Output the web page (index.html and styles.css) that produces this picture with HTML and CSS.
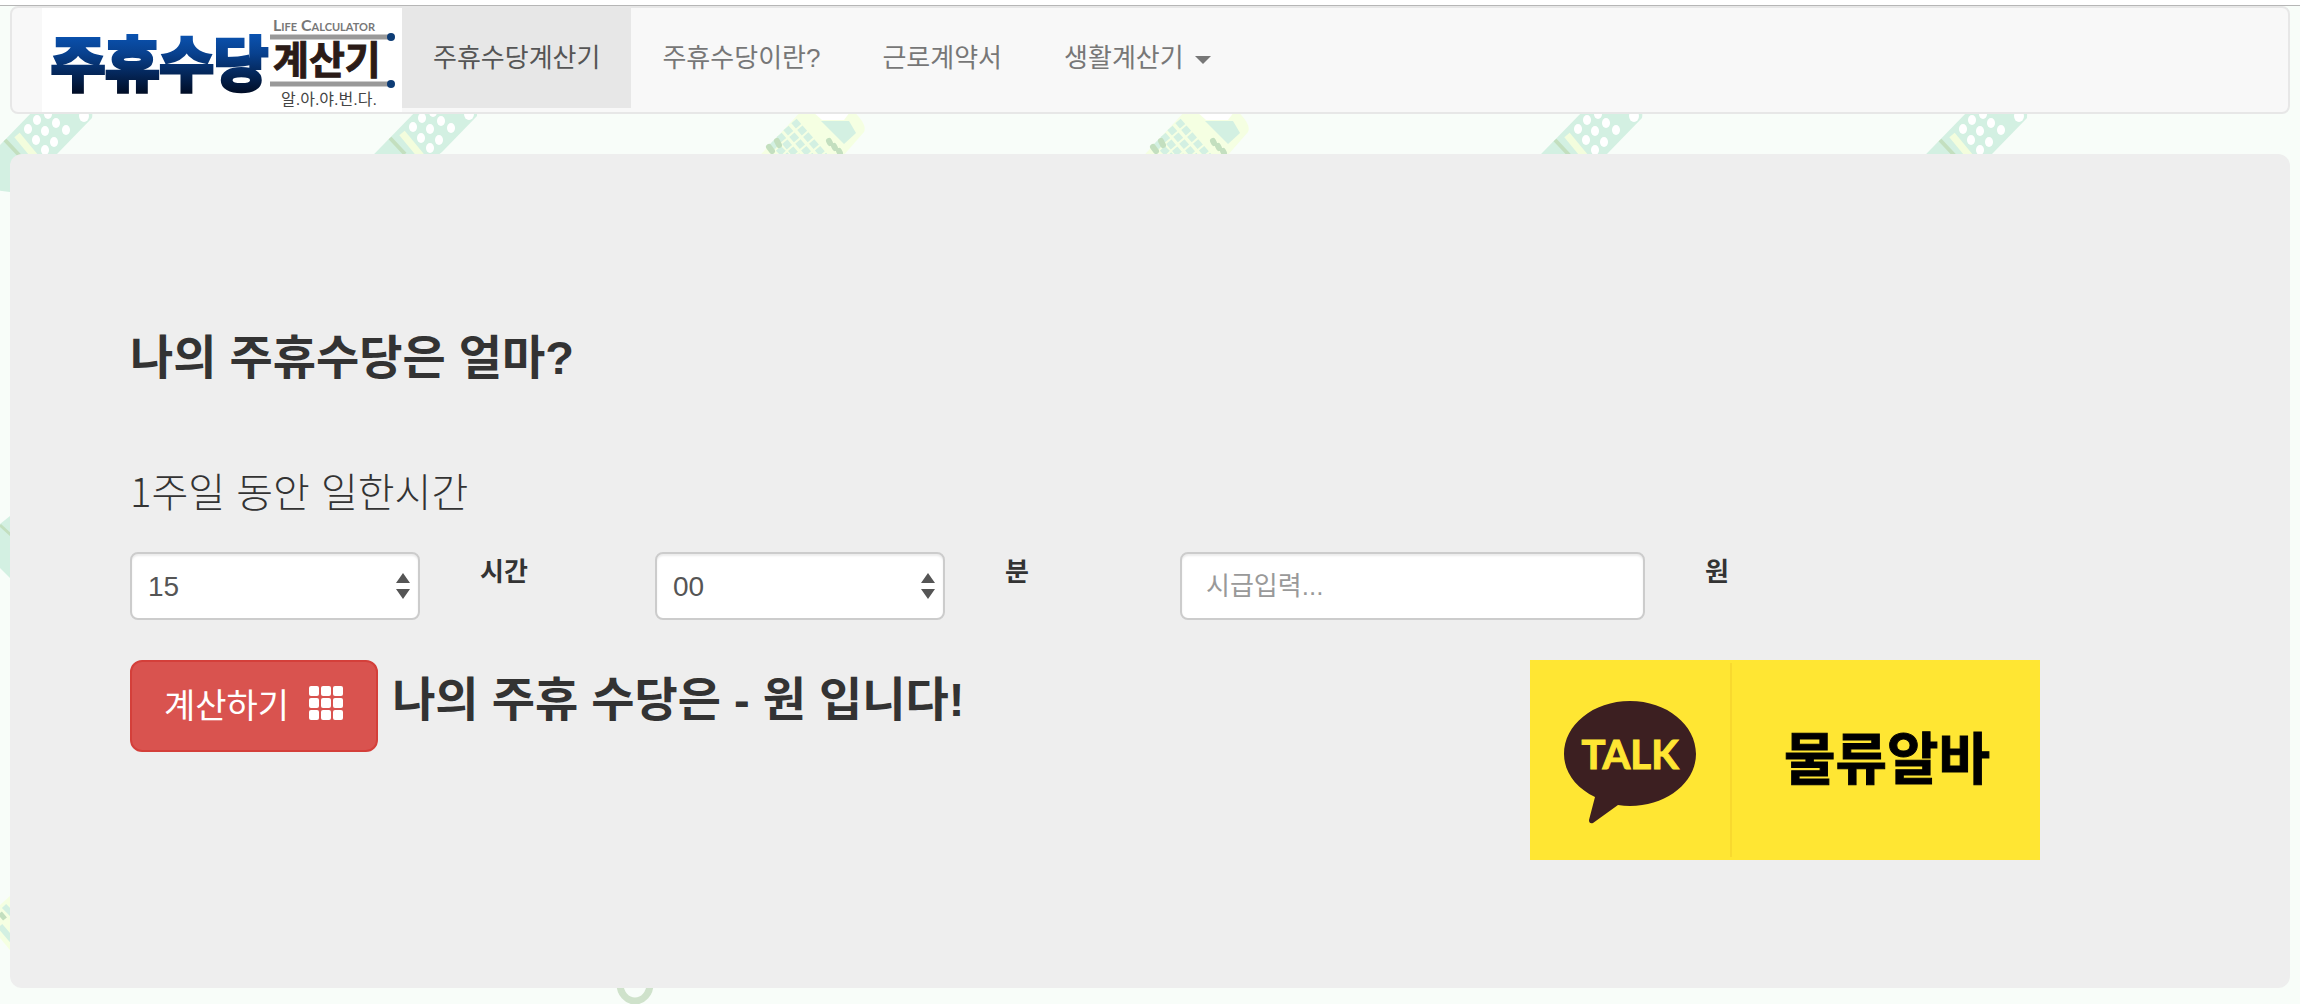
FILE: index.html
```html
<!DOCTYPE html>
<html lang="ko">
  <head>
    <meta charset="UTF-8" />
    <meta name="viewport" content="width=device-width, initial-scale=1.0" />
    <title>주휴수당계산기</title>
    <link rel="stylesheet" href="styles.css">
  </head>
  <body>
    <!-- background pattern -->
    <svg class="pattern" aria-hidden="true">
      <defs>
        <g id="remote">
          <path fill="#d3f0e2" d="M-40 186 L34 110 Q44 100 58 100 L84 104 Q94 108 92 118 L57 154 L10 192 Z" />
          <path stroke="#c3dfbf" stroke-width="4" d="M5 140 L20 156" />
          <path stroke="#f3fddd" stroke-width="7" d="M17 135 L36 158" />
          <g fill="#fff">
            <ellipse cx="28" cy="129" rx="4" ry="5" /><ellipse cx="36" cy="140" rx="4" ry="5" />
            <ellipse cx="45" cy="150" rx="4" ry="5" />
            <ellipse cx="37" cy="120" rx="4" ry="5" /><ellipse cx="45" cy="131" rx="4" ry="5" />
            <ellipse cx="54" cy="142" rx="4" ry="5" /><ellipse cx="48" cy="114" rx="4" ry="5" />
            <ellipse cx="56" cy="123" rx="4" ry="5" /><ellipse cx="66" cy="130" rx="4" ry="5" />
            <ellipse cx="84" cy="116" rx="5" ry="6" />
          </g>
        </g>
        <g id="calc">
          <path fill="#f5ffe2" d="M44 108 L90 108 Q108 124 104 132 L76 164 L-8 164 Z" />
          <path fill="#fff" d="M53 112 L90 112 L84 120 L62 120 Z" />
          <path fill="#d3f0e2" d="M61 121 L89 121 L96 133 L84 144 Z" />
          <path stroke="#d3f0e2" stroke-width="7" stroke-dasharray="7 2" d="M34 121 L66 158 M26 128 L54 160 M19 135 L42 162 M12 142 L32 162" />
          <path stroke="#c3dfbf" stroke-width="6" stroke-linecap="round" d="M17 141 L19 145 M9 147 L12 151 M69 141 L70 143 M74 146 L75 148 M79 151 L80 153" />
        </g>
      </defs>
      <use href="#remote" />
      <use href="#remote" x="385" y="-2" />
      <use href="#calc" x="760" />
      <use href="#calc" x="1144" />
      <use href="#remote" x="1550" />
      <use href="#remote" x="1935" />
      <path fill="#d3f0e2" d="M0 524 L10 516 V578 L0 568 Z" />
      <path stroke="#c3dfbf" stroke-width="3" d="M0 525 L12 536" />
      <path fill="#f5ffe2" d="M0 905 L10 896 V950 L0 938 Z" />
      <path stroke="#d3f0e2" stroke-width="6" d="M4 906 L12 914 M0 926 L12 940" />
      <path stroke="#c3dfbf" stroke-width="5" d="M0 913 L5 919" />
      <ellipse cx="635" cy="984" rx="15" ry="17" fill="none" stroke="#cfe2cb" stroke-width="7" />
    </svg>

    <div class="top-line"></div>

    <nav class="navbar">
      <a class="brand" href="#" aria-label="주휴수당 계산기">
        <svg width="360" height="104" viewBox="0 0 360 104">
          <defs>
            <linearGradient id="blue" x1="0" y1="18" x2="0" y2="86" gradientUnits="userSpaceOnUse">
              <stop offset="0" stop-color="#0b5abf" />
              <stop offset="0.4" stop-color="#08418f" />
              <stop offset="1" stop-color="#000c24" />
            </linearGradient>
          </defs>
          <text class="logo-main" x="9" y="78">주휴수당</text>
          <text class="logo-en" x="231" y="23">Life Calculator</text>
          <path stroke="#999" stroke-width="5" d="M228 29 H346 M228 76 H346" />
          <circle cx="349" cy="29" r="4" fill="#0d3c75" />
          <circle cx="349" cy="76" r="4" fill="#0d3c75" />
          <text class="logo-sub" x="231" y="66">계산기</text>
          <text class="logo-tag" x="239" y="97">알.아.야.번.다.</text>
        </svg>
      </a>
      <ul class="nav">
        <li class="active"><a href="#">주휴수당계산기</a></li>
        <li><a href="#">주휴수당이란?</a></li>
        <li><a href="#">근로계약서</a></li>
        <li><a href="#">생활계산기 <span class="caret"></span></a></li>
      </ul>
    </nav>

    <main class="jumbotron">
      <h2>나의 주휴수당은 얼마?</h2>
      <p class="lead">1주일 동안 일한시간</p>

      <form class="row" onsubmit="calculate(event)">
        <div class="col-2 select-wrap">
          <select class="form-control" id="hour">
            <option>15</option>
            <option>20</option>
            <option>30</option>
            <option>40</option>
          </select>
          <svg class="arrows" width="14" height="26" viewBox="0 0 14 26"><path fill="#555" d="M7 0 L14 10 H0 Z M0 16 H14 L7 26 Z" /></svg>
        </div>
        <label class="col-1" for="hour">시간</label>
        <div class="col-2 select-wrap">
          <select class="form-control" id="minute">
            <option>00</option>
            <option>30</option>
          </select>
          <svg class="arrows" width="14" height="26" viewBox="0 0 14 26"><path fill="#555" d="M7 0 L14 10 H0 Z M0 16 H14 L7 26 Z" /></svg>
        </div>
        <label class="col-1" for="minute">분</label>
        <div class="col-3">
          <input class="form-control pay" type="text" id="pay" placeholder="시급입력...">
        </div>
        <label class="col-3" for="pay">원</label>

        <div class="col-8 result">
          <button class="btn" type="submit">
            계산하기
            <svg width="34" height="34" viewBox="0 0 34 34" fill="#fff">
              <rect width="10" height="10" rx="2" /><rect x="12" width="10" height="10" rx="2" /><rect x="24" width="10" height="10" rx="2" />
              <rect y="12" width="10" height="10" rx="2" /><rect x="12" y="12" width="10" height="10" rx="2" /><rect x="24" y="12" width="10" height="10" rx="2" />
              <rect y="24" width="10" height="10" rx="2" /><rect x="12" y="24" width="10" height="10" rx="2" /><rect x="24" y="24" width="10" height="10" rx="2" />
            </svg>
          </button>
          <strong>나의 주휴 수당은 <span id="total">-</span> 원 입니다!</strong>
        </div>
        <div class="col-4">
          <a class="talk" href="#" aria-label="물류알바">
            <svg width="510" height="200" viewBox="0 0 510 200">
              <rect width="510" height="200" fill="#ffe633" />
              <path stroke="#f8d92f" stroke-width="2" d="M201 3 V197" />
              <path fill="#3c1f21" d="M100 41 C137 41 166 65 166 94 C166 122 137 146 100 146 Q94 146 88 145 L63 163 Q59 164 59 160 L65 137 C46 128 34 112 34 94 C34 65 63 41 100 41 Z" />
              <text class="talk-logo" x="100" y="109" text-anchor="middle">TALK</text>
              <text class="talk-text" x="254" y="119">물류알바</text>
            </svg>
          </a>
        </div>
      </form>
    </main>

    <script>
      function calculate(e) {
        e.preventDefault();
        const hours = Number(document.getElementById("hour").value) + Number(document.getElementById("minute").value) / 60;
        const pay = Number(document.getElementById("pay").value);
        const total = Math.round((Math.min(hours, 40) / 40) * 8 * pay);
        document.getElementById("total").textContent = total ? total.toLocaleString() : "-";
      }
    </script>
  </body>
</html>
```
FILE: styles.css
```css
* {
  box-sizing: border-box;
}

body {
  position: relative;
  margin: 0;
  min-height: 100vh;
  background: #f8fdf9;
  color: #333;
  font-family: "Liberation Sans", "Noto Sans CJK KR", sans-serif;
  font-size: 26px;
  line-height: 40px;
}

.pattern {
  position: absolute;
  top: 0;
  left: 0;
  width: 100%;
  height: 100%;
  z-index: -1;
}

.top-line {
  height: 6px;
  background: #fff;
  border-bottom: 1px solid #b6b6b6;
}

.navbar {
  display: flex;
  margin: 0 10px 40px;
  padding: 0 30px;
  background: #f8f8f8;
  border: 2px solid #e7e7e7;
  border-radius: 8px;
}

.brand {
  background: #fff;
}

.brand svg,
.talk svg {
  display: block;
}

.logo-main {
  font-size: 59px;
  font-weight: bold;
  fill: url(#blue);
  stroke: url(#blue);
  stroke-width: 4px;
}

.logo-en {
  font-family: Lato, sans-serif;
  font-size: 16px;
  font-weight: bold;
  font-variant: small-caps;
  fill: #777;
}

.logo-sub {
  font-size: 39px;
  font-weight: bold;
  fill: #2b1b17;
  stroke: #2b1b17;
  stroke-width: 1px;
}

.logo-tag {
  font-size: 16px;
  fill: #444;
}

.nav {
  display: flex;
  margin: 0;
  padding: 0;
  list-style: none;
}

.nav a {
  display: block;
  padding: 30px 31px;
  color: #777;
  text-decoration: none;
}

.nav .active a {
  color: #555;
  background: #e7e7e7;
}

.caret {
  display: inline-block;
  margin-left: 4px;
  vertical-align: middle;
  border-top: 8px solid;
  border-right: 8px solid transparent;
  border-left: 8px solid transparent;
}

.jumbotron {
  margin: 0 10px;
  padding: 169px 120px 128px;
  background: #eee;
  border-radius: 12px;
}

h2 {
  margin: 0 0 67px;
  font-size: 47px;
  line-height: 70px;
}

.lead {
  margin: 0 0 32px;
  font-family: "Noto Sans CJK KR", sans-serif;
  font-size: 40px;
  font-weight: 300;
  line-height: 60px;
}

.row {
  display: grid;
  grid-template-columns: repeat(12, 1fr);
  row-gap: 40px;
  margin: 0 -30px;
}

.row > * {
  padding: 0 30px;
}

.col-1 {
  grid-column: span 1;
}

.col-2 {
  grid-column: span 2;
}

.col-3 {
  grid-column: span 3;
}

.col-4 {
  grid-column: span 4;
}

.col-8 {
  grid-column: span 8;
}

label {
  font-weight: bold;
}

.form-control {
  display: block;
  width: 100%;
  height: 68px;
  padding: 0 16px;
  appearance: none;
  background: #fff;
  border: 2px solid #ccc;
  border-radius: 8px;
  box-shadow: inset 0 2px 2px rgba(0, 0, 0, 0.08);
  color: #555;
  font-family: inherit;
  font-size: 28px;
}

.pay {
  padding: 0 24px;
  font-size: 26px;
}

.pay::placeholder {
  color: #999;
}

.select-wrap {
  position: relative;
}

.arrows {
  position: absolute;
  top: 21px;
  right: 40px;
  pointer-events: none;
}

.result {
  display: flex;
  align-items: flex-start;
  gap: 14px;
}

.result strong {
  font-size: 47px;
  line-height: 80px;
}

.btn {
  display: flex;
  align-items: center;
  gap: 20px;
  height: 92px;
  padding: 0 33px 6px 32px;
  background: #d9534f;
  border: 2px solid #d43f3a;
  border-radius: 12px;
  color: #fff;
  font-family: inherit;
  font-size: 34px;
  cursor: pointer;
}

.talk {
  display: inline-block;
  vertical-align: top;
}

.talk-logo {
  font-family: Lato, sans-serif;
  font-size: 40px;
  font-weight: bold;
  fill: #ffe633;
  stroke: #ffe633;
  stroke-width: 1px;
}

.talk-text {
  font-size: 56px;
  font-weight: bold;
  stroke: #000;
  stroke-width: 1px;
}
```
